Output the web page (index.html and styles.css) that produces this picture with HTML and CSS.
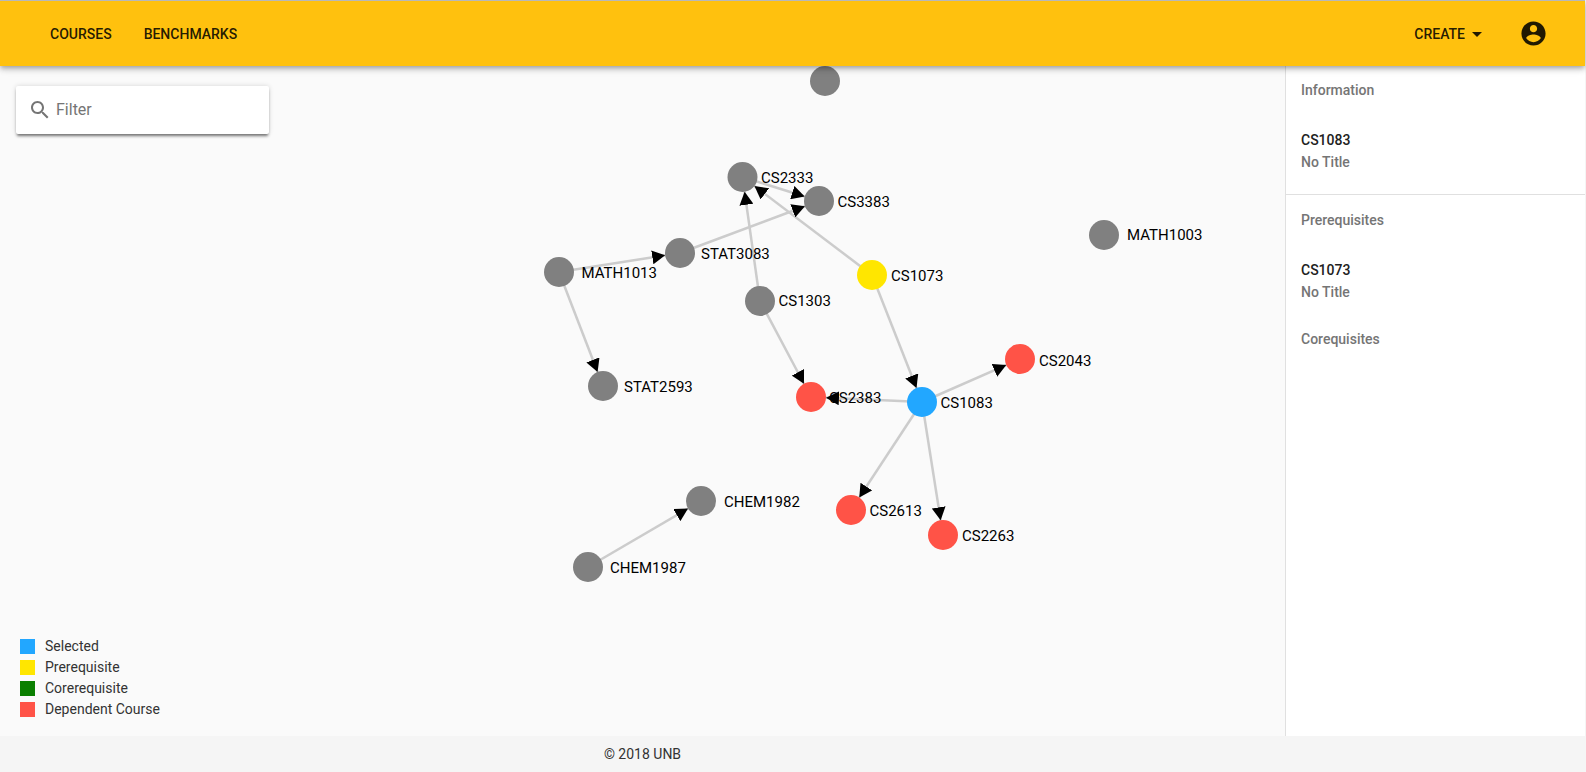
FILE: index.html
```html
<!DOCTYPE html>
<html lang="en">
  <head>
    <meta charset="UTF-8" />
    <title>Course Map</title>
    <link rel="stylesheet" href="styles.css">
  </head>
  <body>
    <div class="app">
      <header class="toolbar">
        <nav class="toolbar-links">
          <a class="toolbar-btn">Courses</a>
          <a class="toolbar-btn">Benchmarks</a>
        </nav>
        <div class="toolbar-actions">
          <a class="toolbar-btn create-btn">Create
            <svg class="caret" viewBox="0 0 24 24"><path d="M7 10l5 5 5-5z" /></svg>
          </a>
          <svg class="account" viewBox="0 0 24 24">
            <path d="M12 2C6.48 2 2 6.48 2 12s4.48 10 10 10 10-4.48 10-10S17.52 2 12 2zm0 3c1.66 0 3 1.34 3 3s-1.34 3-3 3-3-1.34-3-3 1.34-3 3-3zm0 14.2c-2.5 0-4.71-1.28-6-3.22.03-1.99 4-3.08 6-3.08 1.99 0 5.97 1.09 6 3.08-1.29 1.94-3.5 3.22-6 3.22z" />
          </svg>
        </div>
      </header>

      <main class="content">
        <section class="canvas">
          <!-- viewBox starts at 66 so the numbers below are page coordinates -->
          <svg class="graph" viewBox="0 66 1285 670">
            <defs>
              <marker id="arrow" markerUnits="userSpaceOnUse" markerWidth="14" markerHeight="14" refX="28" refY="7" orient="auto">
                <path d="M0 0L13 7L0 14z" />
              </marker>
              <g id="edges">
                <line x1="742.5" y1="177" x2="819" y2="201" />
                <line x1="680" y1="253" x2="819" y2="201" />
                <line x1="559" y1="272" x2="680" y2="253" />
                <line x1="559" y1="272" x2="603" y2="386" />
                <line x1="760" y1="301" x2="742.5" y2="177" />
                <line x1="872" y1="275" x2="742.5" y2="177" />
                <line x1="760" y1="301" x2="811" y2="397" />
                <line x1="872" y1="275" x2="922" y2="402" />
                <line x1="922" y1="402" x2="1020" y2="359" />
                <line x1="922" y1="402" x2="811" y2="397" />
                <line x1="922" y1="402" x2="851" y2="510" />
                <line x1="922" y1="402" x2="943" y2="535" />
                <line x1="588" y1="567" x2="701" y2="501" />
              </g>
            </defs>

            <!-- lines sit under the labels, arrowheads over them -->
            <use class="edge-lines" href="#edges" />

            <g class="labels">
              <text x="761" y="183">CS2333</text>
              <text x="837.5" y="207">CS3383</text>
              <text x="891" y="281">CS1073</text>
              <text x="778.5" y="306">CS1303</text>
              <text x="701" y="259">STAT3083</text>
              <text x="581.5" y="278">MATH1013</text>
              <text x="624" y="392">STAT2593</text>
              <text x="1127" y="240">MATH1003</text>
              <text x="829" y="403">CS2383</text>
              <text x="940.5" y="408">CS1083</text>
              <text x="1039" y="366">CS2043</text>
              <text x="869.5" y="516">CS2613</text>
              <text x="962" y="541">CS2263</text>
              <text x="724" y="507">CHEM1982</text>
              <text x="610" y="573">CHEM1987</text>
            </g>

            <use class="edge-arrows" href="#edges" />

            <g class="nodes">
              <circle cx="825" cy="81" r="15" />
              <circle cx="742.5" cy="177" r="15" />
              <circle cx="819" cy="201" r="15" />
              <circle class="prereq" cx="872" cy="275" r="15" />
              <circle cx="760" cy="301" r="15" />
              <circle cx="680" cy="253" r="15" />
              <circle cx="559" cy="272" r="15" />
              <circle cx="603" cy="386" r="15" />
              <circle cx="1104" cy="235" r="15" />
              <circle class="dependent" cx="811" cy="397" r="15" />
              <circle class="selected" cx="922" cy="402" r="15" />
              <circle class="dependent" cx="1020" cy="359" r="15" />
              <circle class="dependent" cx="851" cy="510" r="15" />
              <circle class="dependent" cx="943" cy="535" r="15" />
              <circle cx="701" cy="501" r="15" />
              <circle cx="588" cy="567" r="15" />
            </g>
          </svg>

          <div class="filter">
            <svg class="filter-icon" viewBox="0 0 24 24">
              <path d="M15.5 14h-.79l-.28-.27C15.41 12.59 16 11.11 16 9.5 16 5.91 13.09 3 9.5 3S3 5.91 3 9.5 5.91 16 9.5 16c1.61 0 3.09-.59 4.23-1.57l.27.28v.79l5 4.99L20.49 19l-4.99-5zm-6 0C7.01 14 5 11.99 5 9.5S7.01 5 9.5 5 14 7.01 14 9.5 11.99 14 9.5 14z" />
            </svg>
            <input class="filter-input" type="text" placeholder="Filter" />
          </div>

          <ul class="legend">
            <li><span class="swatch selected"></span>Selected</li>
            <li><span class="swatch prereq"></span>Prerequisite</li>
            <li><span class="swatch coreq"></span>Corerequisite</li>
            <li><span class="swatch dependent"></span>Dependent Course</li>
          </ul>
        </section>

        <aside class="panel">
          <div class="panel-section">
            <h3 class="panel-title">Information</h3>
            <div class="panel-item">
              <div class="item-code">CS1083</div>
              <div class="item-name">No Title</div>
            </div>
          </div>
          <div class="panel-divider"></div>
          <div class="panel-section">
            <h3 class="panel-title">Prerequisites</h3>
            <div class="panel-item">
              <div class="item-code">CS1073</div>
              <div class="item-name">No Title</div>
            </div>
          </div>
          <div class="panel-section">
            <h3 class="panel-title">Corequisites</h3>
          </div>
        </aside>
      </main>

      <footer class="footer">© 2018 UNB</footer>
    </div>
  </body>
</html>
```

FILE: styles.css
```css
html,
body {
  height: 100%;
}

body {
  margin: 0;
  background: #f5f5f5;
  color: #212121;
  font-family: Roboto, "Noto Sans", sans-serif;
  font-size: 14px;
}

.app {
  display: flex;
  flex-direction: column;
  height: 100%;
  margin-right: 1px;
}

/* toolbar */
.toolbar {
  position: relative;
  z-index: 2;
  display: flex;
  flex: none;
  align-items: center;
  justify-content: space-between;
  box-sizing: border-box;
  height: 66px;
  padding: 0 37px 0 34px;
  background: #ffc10e;
  border-top: 1px solid #b8b8b8;
  box-shadow: 0 2px 4px -1px rgba(0, 0, 0, 0.2), 0 4px 5px rgba(0, 0, 0, 0.14), 0 1px 10px rgba(0, 0, 0, 0.12);
}

.toolbar-links,
.toolbar-actions {
  display: flex;
  align-items: center;
}

.toolbar-btn {
  padding: 0 16px;
  color: rgba(0, 0, 0, 0.87);
  font-weight: 500;
  text-transform: uppercase;
}

.create-btn {
  display: flex;
  align-items: center;
  padding: 0;
  margin-right: 30px;
}

.caret {
  width: 24px;
  height: 24px;
  fill: rgba(0, 0, 0, 0.87);
}

.account {
  width: 29px;
  height: 29px;
  fill: rgba(0, 0, 0, 0.87);
}

/* main area */
.content {
  display: flex;
  flex: 1;
  min-height: 0;
}

.canvas {
  position: relative;
  flex: 1;
  background: #fafafa;
}

.graph {
  position: absolute;
  top: 0;
  left: 0;
  width: 1285px;
  height: 670px;
}

.labels text {
  font-size: 15px;
  fill: #000;
}

.edge-lines {
  stroke: #ccc;
  stroke-width: 2.5;
}

.edge-arrows {
  stroke: none;
  marker-end: url(#arrow);
}

.nodes circle {
  fill: #808080;
}

.nodes .selected {
  fill: #22a7ff;
}

.nodes .prereq {
  fill: #ffe600;
}

.nodes .dependent {
  fill: #ff5347;
}

/* filter box */
.filter {
  position: absolute;
  top: 20px;
  left: 16px;
  display: flex;
  align-items: center;
  box-sizing: border-box;
  width: 253px;
  height: 48px;
  padding: 0 12px;
  background: #fff;
  border-radius: 2px;
  box-shadow: 0 3px 3px -1px rgba(0, 0, 0, 0.5), 0 0 5px rgba(0, 0, 0, 0.15);
}

.filter-icon {
  flex: none;
  width: 24px;
  height: 24px;
  fill: #757575;
}

.filter-input {
  flex: 1;
  min-width: 0;
  margin-left: 4px;
  padding: 0 0 2px;
  border: none;
  outline: none;
  background: transparent;
  font-family: inherit;
  font-size: 16px;
}

.filter-input::placeholder {
  color: #757575;
  opacity: 1;
}

/* legend */
.legend {
  position: absolute;
  bottom: 16px;
  left: 20px;
  margin: 0;
  padding: 0;
  list-style: none;
  color: #333;
}

.legend li {
  display: flex;
  align-items: center;
  height: 20px;
  padding-bottom: 1px;
}

.swatch {
  width: 15px;
  height: 15px;
  margin: 1px 10px 0 0;
}

.swatch.selected {
  background: #22a7ff;
}

.swatch.prereq {
  background: #ffe600;
}

.swatch.coreq {
  background: #0a7f00;
}

.swatch.dependent {
  background: #ff5347;
}

/* side panel */
.panel {
  flex: none;
  box-sizing: border-box;
  width: 300px;
  background: #fff;
  border-left: 1px solid #e0e0e0;
}

.panel-section {
  padding: 14px 15px 0;
}

.panel-title {
  margin: 0;
  color: #757575;
  font-size: 14px;
  font-weight: 500;
  line-height: 20px;
}

.panel-item {
  padding: 30px 0 13px;
  line-height: 20px;
  font-weight: 500;
}

.item-code {
  color: #212121;
}

.item-name {
  margin-top: 2px;
  color: #757575;
}

.panel-divider {
  margin: 9px 0 1px;
  border-bottom: 1px solid #e0e0e0;
}

/* footer */
.footer {
  flex: none;
  height: 36px;
  padding-right: 300px;
  color: #333;
  line-height: 36px;
  text-align: center;
}
```
